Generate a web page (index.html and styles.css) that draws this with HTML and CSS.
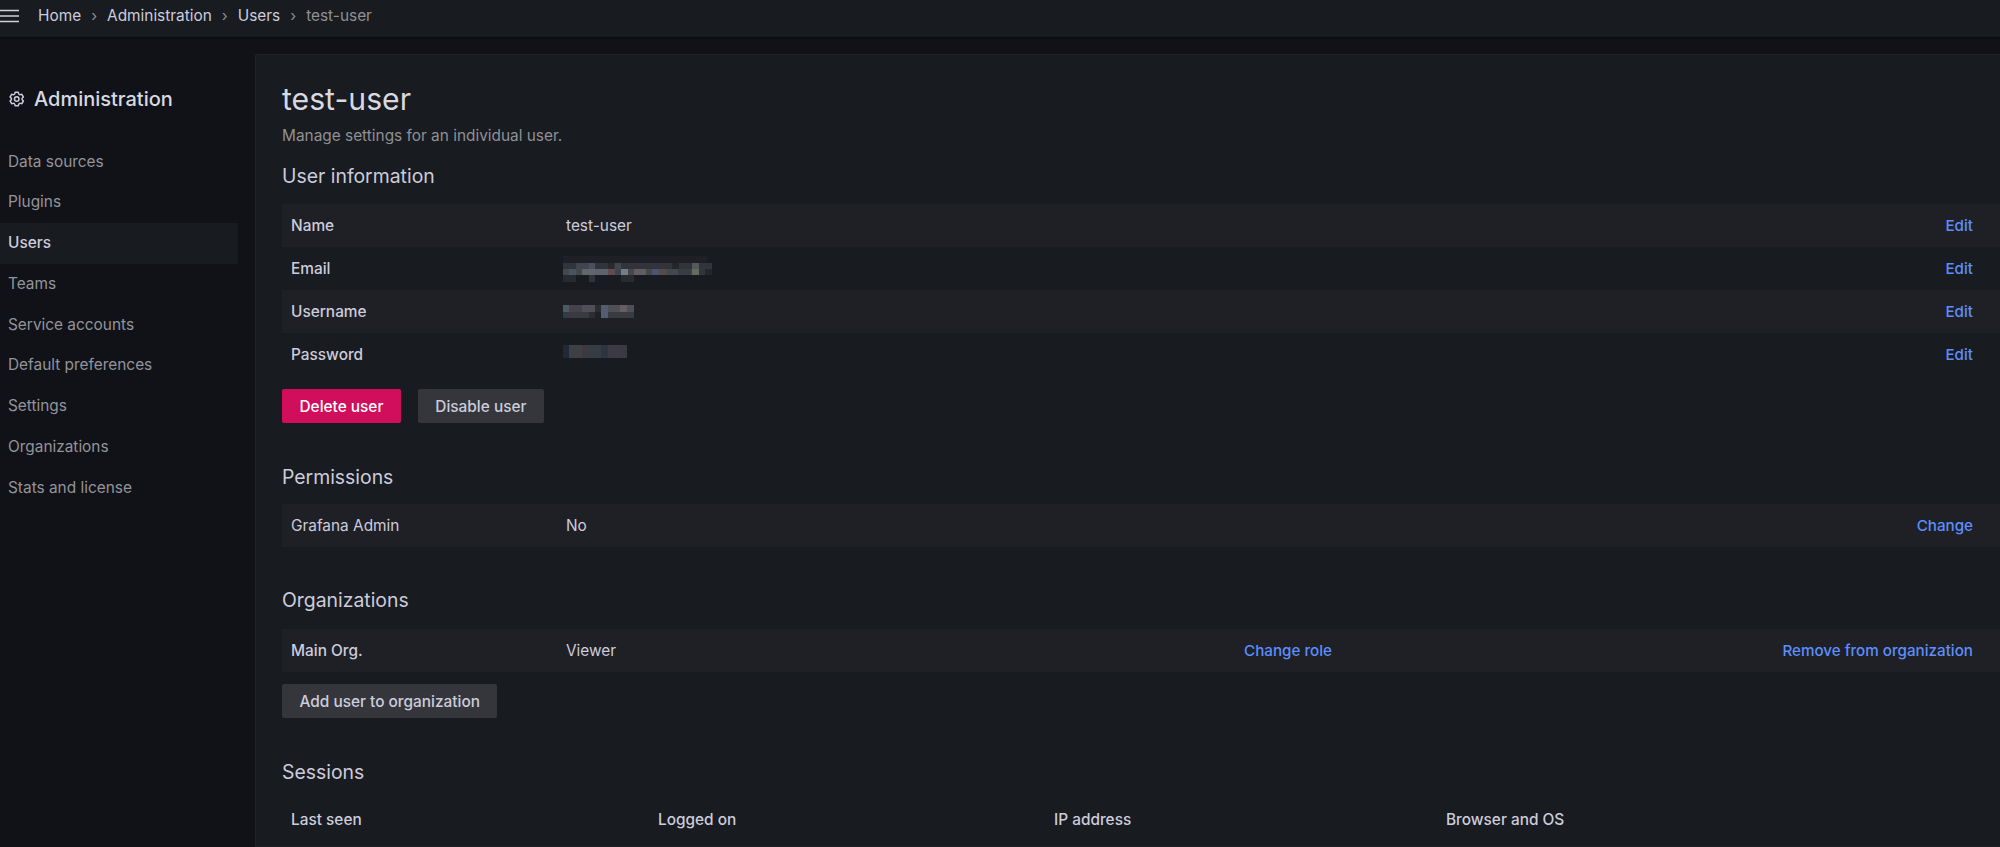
FILE: index.html
```html
<!DOCTYPE html>
<html lang="en">
<head>
<meta charset="utf-8">
<title>test-user - Users - Administration</title>
<link rel="stylesheet" href="styles.css">
</head>
<body>
<header class="topbar">
  <svg class="burger" width="20" height="14" viewBox="0 0 20 14"><path d="M0 1.500h19M0 7h19M0 12.500h19" stroke="#d0d1d5" stroke-width="1.600" fill="none"/></svg>
  <nav class="crumbs">
    <a>Home</a><span class="sep">›</span><a>Administration</a><span class="sep">›</span><a>Users</a><span class="sep">›</span><span class="current">test-user</span>
  </nav>
</header>
<div class="layout">
  <aside class="sidebar">
    <div class="side-title">
      <svg class="cog" width="18" height="18" viewBox="0 0 24 24" fill="#ccccdc"><path d="M19.9,12.66a1,1,0,0,1,0-1.32L21.18,9.9a1,1,0,0,0,.12-1.17l-2-3.46a1,1,0,0,0-1.07-.48l-1.88.38a1,1,0,0,1-1.15-.66l-.61-1.83A1,1,0,0,0,13.64,2h-4a1,1,0,0,0-1,.68L8.08,4.51a1,1,0,0,1-1.15.66L5,4.79A1,1,0,0,0,4,5.27L2,8.73A1,1,0,0,0,2.1,9.9l1.27,1.44a1,1,0,0,1,0,1.32L2.1,14.1A1,1,0,0,0,2,15.27l2,3.46a1,1,0,0,0,1.07.48l1.88-.38a1,1,0,0,1,1.15.66l.61,1.83a1,1,0,0,0,1,.68h4a1,1,0,0,0,.95-.68l.61-1.83a1,1,0,0,1,1.15-.66l1.88.38a1,1,0,0,0,1.07-.48l2-3.46a1,1,0,0,0-.12-1.17ZM18.41,14l.8.9-1.28,2.22-1.18-.24a3,3,0,0,0-3.45,2L12.92,20H10.36L10,18.86a3,3,0,0,0-3.45-2l-1.18.24L4.07,14.89l.8-.9a3,3,0,0,0,0-4l-.8-.9L5.35,6.89l1.18.24a3,3,0,0,0,3.45-2L10.36,4h2.56l.38,1.14a3,3,0,0,0,3.45,2l1.18-.24,1.28,2.22-.8.9A3,3,0,0,0,18.41,14ZM11.64,8a4,4,0,1,0,4,4A4,4,0,0,0,11.64,8Zm0,6a2,2,0,1,1,2-2A2,2,0,0,1,11.64,14Z"/></svg>
      <span>Administration</span>
    </div>
    <ul class="side-list">
      <li>Data sources</li>
      <li>Plugins</li>
      <li class="active">Users</li>
      <li>Teams</li>
      <li>Service accounts</li>
      <li>Default preferences</li>
      <li>Settings</li>
      <li>Organizations</li>
      <li>Stats and license</li>
    </ul>
  </aside>
  <main class="panel">
    <h1>test-user</h1>
    <p class="desc">Manage settings for an individual user.</p>

    <h3 class="h-user">User information</h3>
    <div class="rows">
      <div class="row"><b class="key">Name</b><span class="val">test-user</span><a class="lnk end">Edit</a></div>
      <div class="row"><b class="key">Email</b><span class="val">
        <svg class="mosaic" width="149" height="26" viewBox="0 0 150 26" shape-rendering="crispEdges">
          <rect x="0" y="0" width="145" height="6.500" fill="#1f2126"/>
          <rect x="0" y="6.500" width="150" height="6.500" fill="#34373d"/>
          <rect x="13" y="6.500" width="13" height="6.500" fill="#474a52"/><rect x="26" y="6.500" width="6.500" height="6.500" fill="#505668"/><rect x="45" y="6.500" width="6.500" height="6.500" fill="#2a2c30"/><rect x="52" y="6.500" width="6.500" height="6.500" fill="#484b50"/><rect x="110" y="6.500" width="6.500" height="6.500" fill="#26282b"/><rect x="130" y="6.500" width="6.500" height="6.500" fill="#5d5f62"/>
          <rect x="0" y="13" width="150" height="6.500" fill="#4a4c54"/>
          <rect x="6.500" y="13" width="6.500" height="6.500" fill="#4c5b6c"/><rect x="19.500" y="13" width="13" height="6.500" fill="#6a6e78"/><rect x="32.500" y="13" width="13" height="6.500" fill="#636b74"/><rect x="45.500" y="13" width="6.500" height="6.500" fill="#6b5255"/><rect x="52" y="13" width="6.500" height="6.500" fill="#3c4a58"/><rect x="58.500" y="13" width="6.500" height="6.500" fill="#858790"/><rect x="71" y="13" width="13" height="6.500" fill="#6e6468"/><rect x="90" y="13" width="13" height="6.500" fill="#555a7a"/><rect x="97" y="13" width="6.500" height="6.500" fill="#5e5148"/><rect x="116" y="13" width="13" height="6.500" fill="#3f4046"/><rect x="130" y="13" width="6.500" height="6.500" fill="#6f7468"/><rect x="136.500" y="13" width="6.500" height="6.500" fill="#363840"/><rect x="143" y="13" width="7" height="6.500" fill="#26282c"/>
          <rect x="0" y="19.500" width="13" height="6.500" fill="#2a2c31"/><rect x="26" y="19.500" width="6.500" height="6.500" fill="#33363c"/><rect x="58" y="19.500" width="13" height="6.500" fill="#2b2d31"/>
        </svg></span><a class="lnk end">Edit</a></div>
      <div class="row"><b class="key">Username</b><span class="val">
        <svg class="mosaic" width="71" height="13" viewBox="0 0 72 13" shape-rendering="crispEdges">
          <rect width="72" height="6.500" fill="#55565d"/><rect width="6.500" height="6.500" fill="#51616d"/><rect x="6.500" width="13" height="6.500" fill="#4c464f"/><rect x="32" width="6.500" height="6.500" fill="#2c2e32"/><rect x="39" width="6.500" height="6.500" fill="#586478"/><rect x="58" width="7" height="6.500" fill="#6d6668"/>
          <rect y="6.500" width="72" height="6.500" fill="#3d3f45"/><rect y="6.500" width="6.500" height="6.500" fill="#323f4c"/><rect x="26" y="6.500" width="6.500" height="6.500" fill="#2e3035"/><rect x="32" y="6.500" width="7" height="6.500" fill="#1f2226"/><rect x="39" y="6.500" width="6.500" height="6.500" fill="#5a6578"/>
        </svg></span><a class="lnk end">Edit</a></div>
      <div class="row"><b class="key">Password</b><span class="val">
        <svg class="mosaic pw" width="64" height="13" viewBox="0 0 65 13" shape-rendering="crispEdges">
          <rect width="65" height="13" fill="#3e3e44"/><rect width="6.500" height="13" fill="#232a3a"/><rect x="6.500" width="13" height="13" fill="#454347"/><rect x="26" width="13" height="13" fill="#384149"/><rect x="39" width="6.500" height="13" fill="#303845"/><rect x="45.500" width="13" height="13" fill="#413f49"/>
        </svg></span><a class="lnk end">Edit</a></div>
    </div>
    <div class="actions">
      <button class="btn danger">Delete user</button>
      <button class="btn">Disable user</button>
    </div>

    <h3 class="h-perm">Permissions</h3>
    <div class="rows">
      <div class="row"><span class="key plain">Grafana Admin</span><span class="val">No</span><a class="lnk end">Change</a></div>
    </div>

    <h3 class="h-org">Organizations</h3>
    <div class="rows">
      <div class="row"><b class="key">Main Org.</b><span class="val val-org">Viewer</span><a class="lnk role">Change role</a><a class="lnk end">Remove from organization</a></div>
    </div>
    <div class="actions add">
      <button class="btn">Add user to organization</button>
    </div>

    <h3 class="h-sess">Sessions</h3>
    <div class="sess-head">
      <b>Last seen</b><b>Logged on</b><b>IP address</b><b>Browser and OS</b>
    </div>
  </main>
</div>
</body>
</html>
```
FILE: styles.css
```css
* { box-sizing: border-box; }
html, body { height: 100%; }
body {
  margin: 0;
  height: 847px;
  overflow: hidden;
  background: #111217;
  color: #ccccdc;
  font-family: Inter, "Noto Sans", "Liberation Sans", sans-serif;
  font-size: 15.400px;
}
.topbar {
  height: 37px;
  background: #181b1f;
  box-shadow: 0 1px 2px #0a0b0e;
  display: flex;
  align-items: center;
  position: relative;
  z-index: 1;
}
.burger { flex: none; margin: 0 18px 6px 0; }
.crumbs { display: flex; align-items: center; margin-bottom: 7px; color: #ccccdc; }
.sep { margin: 0 10px; color: #8e8e96; }
.current { color: #8f9096; }
.layout { display: flex; height: 810px; }
.sidebar { width: 255px; flex: none; padding-top: 45px; }
.side-title {
  display: flex;
  align-items: center;
  gap: 8px;
  height: 34px;
  padding-left: 8px;
  font-size: 20px;
  font-weight: 500;
  color: #d8d9e2;
}
.cog { flex: none; }
.side-list { list-style: none; margin: 25.500px 0 0; padding: 0; width: 238px; }
.side-list li {
  height: 40.800px;
  line-height: 40.800px;
  padding-left: 8px;
  color: #93949b;
}
.side-list li.active { background: #181b1f; color: #ccccdc; font-weight: 500; }
.panel {
  flex: 1;
  min-width: 0;
  margin-top: 17px;
  background: #181b1f;
  border: 1px solid #202226;
  border-right: 0;
  border-radius: 2px 0 0 0;
  padding: 24px 0 0 26px;
  overflow: hidden;
}
h1 { margin: 0; font-size: 30.200px; font-weight: 400; line-height: 40px; color: #d8d9e2; }
.desc { margin: 6px 0 0; line-height: 22px; color: #8f9096; }
h3 { margin: 0; font-size: 19.400px; font-weight: 400; line-height: 28px; color: #ccccdc; }
.h-user { margin-top: 15px; margin-bottom: 14px; }
.h-perm { margin-top: 40px; margin-bottom: 13px; }
.h-org { margin-top: 39px; margin-bottom: 15px; }
.h-sess { margin-top: 40px; }
.row {
  height: 43px;
  display: flex;
  align-items: center;
  padding: 0 27px 0 9px;
}
.rows .row:nth-child(odd) { background: #1e2025; }
.key { width: 275px; flex: none; font-weight: 500; }
.key.plain { font-weight: 400; }
.val { flex: none; display: flex; align-items: center; }
.val-org { width: 678px; }
.mosaic { display: block; margin-left: -3px; opacity: .9; }
.mosaic.pw { margin-top: -6px; }
.lnk { color: #5d8efb; font-size: 15.200px; font-weight: 500; white-space: nowrap; }
.end { margin-left: auto; }
.actions { display: flex; gap: 17px; margin-top: 13px; }
.actions.add { margin-top: 12px; }
.btn {
  height: 34px;
  padding: 0 17.500px;
  border: 0;
  border-radius: 2px;
  background: #34363b;
  color: #ccccdc;
  font: 500 15.400px Inter, "Noto Sans", "Liberation Sans", sans-serif;
}
.btn.danger { background: #d10e5c; color: #fff; }
.sess-head {
  display: grid;
  grid-template-columns: 367px 396px 392px 1fr;
  padding: 23px 0 0 9px;
  line-height: 22px;
}
.sess-head b { font-weight: 500; }
```
